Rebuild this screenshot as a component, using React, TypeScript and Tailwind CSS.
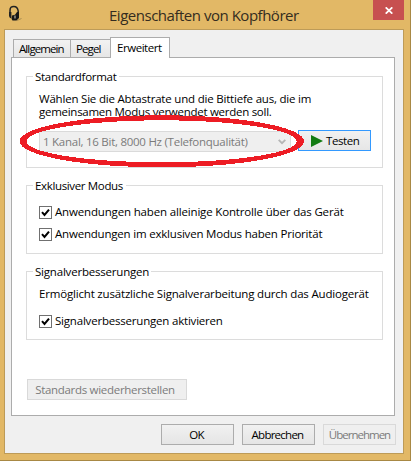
import React from "react";
import { clsx } from "clsx";

const tabs = [
  { name: "Allgemein", className: "w-[58px] pl-[5px] tracking-[-0.9px]" },
  { name: "Pegel", className: "w-[41px] -ml-px pl-[5px] tracking-[-0.9px]" },
];

const Group: React.FC<{ title: string; titleClass: string; className: string; children: React.ReactNode }> = ({
  title,
  titleClass,
  className,
  children,
}) => (
  <section className={clsx("relative w-[357px] border border-[#dcdcdc] pl-3", className)}>
    <h2 className={clsx("absolute left-1.5 -top-2 h-4 bg-white pl-0.5 leading-4", titleClass)}>{title}</h2>
    {children}
  </section>
);

const CheckRow: React.FC<{ label: string; className?: string }> = ({ label, className }) => (
  <div className={clsx("flex h-[22px] items-center gap-[3px]", className)}>
    <span className="flex h-[13px] w-[13px] shrink-0 items-center justify-center border border-[#707070] bg-white">
      <svg width="11" height="11" viewBox="0 0 11 11" fill="none">
        <path d="M2 5.2 4.5 8 9 2.6" stroke="#000" strokeWidth="2" />
      </svg>
    </span>
    <span>{label}</span>
  </div>
);

const HeadphonesIcon = () => (
  <svg width="16" height="17" viewBox="0 0 16 17" fill="none">
    <path d="M3 11V5.5C3 2.5 4.5 1.4 6.8 1.4S10.8 3 11.2 6V11" stroke="#222" strokeWidth="1.5" />
    <path d="M2 7h2.4v6.5L2.8 12.8 2 11Z" fill="#222" />
    <path d="M5 10.5 8 9.8l2-2.8h2v6l-2.5 2.6H5.5L4.6 14Z" fill="#171717" />
    <path d="M7 10.5h2v3H7Z" fill="#77736c" />
    <path d="M10 15.5 14.5 13.5" stroke="#a98c50" />
  </svg>
);

export default function App() {
  return (
    <div className="relative flex h-[461px] w-[411px] flex-col overflow-hidden border-r border-b border-[#a88844] bg-[#e2b866] font-['Open_Sans','Noto_Sans',sans-serif] text-[11.5px] tracking-[-0.2px] text-black">
      {/* Title bar */}
      <header className="flex h-[29px] shrink-0 items-start">
        <div className="ml-[7px] mt-[5px] w-[102px]">
          <HeadphonesIcon />
        </div>
        <h1 className="mt-[3px] w-[264px] whitespace-nowrap text-[15px] leading-6 tracking-[-0.48px] text-[#342c20]">
          Eigenschaften von Kopfhörer
        </h1>
        <button className="flex h-5 w-[31px] items-center justify-center bg-[#c75050]">
          <svg width="8" height="7" viewBox="0 0 8 7">
            <path d="M.7.3 7.3 6.7M7.3.3.7 6.7" stroke="#fff" strokeWidth="1.7" />
          </svg>
        </button>
      </header>

      <main className="ml-1 h-[425px] w-[400px] shrink-0 border border-[#bd9b58] bg-[#f0f0f0] pl-1.5 pt-[7px]">
        {/* Tabs */}
        <nav className="relative z-10 flex h-5 items-end pl-0.5">
          {tabs.map((tab) => (
            <button
              key={tab.name}
              className={clsx(
                "h-[18px] border border-b-0 border-[#acacac] bg-linear-to-b from-[#f2f2f2] to-[#e6e6e6] text-left leading-[18px]",
                tab.className
              )}
            >
              {tab.name}
            </button>
          ))}
          <button className="-mb-px -ml-px h-[21px] w-[60px] border border-b-0 border-[#acacac] bg-white pl-1.5 text-left leading-[18px] tracking-[-0.45px]">
            Erweitert
          </button>
        </nav>

        <div className="h-[359px] w-[384px] border border-[#acacac] bg-white pl-3.5 pt-[18px] whitespace-nowrap">
          <Group title="Standardformat" titleClass="w-[86px] tracking-[-0.3px]" className="h-[92px] pt-[15px]">
            <p className="leading-[13px]">Wählen Sie die Abtastrate und die Bittiefe aus, die im</p>
            <p className="leading-[13px] tracking-[-0.27px]">gemeinsamen Modus verwendet werden soll.</p>
            <div className="mt-3 flex items-start gap-[7px]">
              <div className="mt-px flex h-[21px] w-[252px] items-center justify-between border border-[#dadada] bg-[#efefef] pl-[3px] pr-1 text-[#7b7b7b]">
                <span className="tracking-[-0.26px]">1 Kanal, 16 Bit, 8000 Hz (Telefonqualität)</span>
                <svg width="8" height="6" viewBox="0 0 8 6" fill="none">
                  <path d="M.7.8 4 4.2 7.3.8" stroke="#b5b5b5" strokeWidth="1.8" />
                </svg>
              </div>
              <button className="flex h-[21px] w-[73px] items-center border border-[#3399ff] bg-linear-to-b from-[#f1f1f1] to-[#e6e6e6] pl-3">
                <svg width="12" height="12" viewBox="0 0 12 12">
                  <path d="M0 0 12 6 0 12Z" fill="#137c13" />
                </svg>
                <span className="ml-[3px] tracking-[-0.4px]">Testen</span>
              </button>
            </div>
          </Group>

          <Group title="Exklusiver Modus" titleClass="w-[93px] tracking-[-0.35px]" className="mt-[17px] h-[69px] pt-[15px]">
            <CheckRow label="Anwendungen haben alleinige Kontrolle über das Gerät" className="tracking-[-0.16px]" />
            <CheckRow label="Anwendungen im exklusiven Modus haben Priorität" />
          </Group>

          <Group title="Signalverbesserungen" titleClass="w-[118px]" className="mt-[17px] h-[69px] pt-[14px]">
            <p className="leading-4 tracking-[-0.18px]">Ermöglicht zusätzliche Signalverarbeitung durch das Audiogerät</p>
            <CheckRow label="Signalverbesserungen aktivieren" className="mt-2" />
          </Group>

          <button className="mt-[39px] ml-px block h-[21px] w-[160px] border border-[#d9d9d9] bg-[#efefef] pr-1 leading-[18px] tracking-[-0.3px] text-[#7b7b7b]">
            Standards wiederherstellen
          </button>
        </div>

        {/* Dialog buttons */}
        <footer className="ml-[150px] mt-2 flex gap-2 leading-[18px]">
          <button className="h-[21px] w-[73px] border border-[#acacac] bg-linear-to-b from-[#f1f1f1] to-[#e5e5e5] pt-px pr-0.5 tracking-[-0.7px]">OK</button>
          <button className="h-[21px] w-[73px] border border-[#acacac] bg-linear-to-b from-[#f1f1f1] to-[#e5e5e5] pt-px pr-0.5 tracking-[-0.75px]">Abbrechen</button>
          <button className="h-[21px] w-[73px] border border-[#d9d9d9] bg-[#efefef] pt-px tracking-[-1px] text-[#7b7b7b]">Übernehmen</button>
        </footer>
      </main>

      {/* Marker around the format select */}
      <svg className="pointer-events-none absolute left-0 top-0 z-20" width="411" height="461" viewBox="0 0 411 461">
        <path
          d="M19.5 141.3a142.3 26 0 0 1 284.6 0a142.3 26 0 0 1-284.6 0ZM26.6 141.3a135 21 0 0 0 270 0a135 21 0 0 0-270 0Z"
          fill="#ed1c24"
          fillRule="evenodd"
          shapeRendering="crispEdges"
        />
      </svg>
    </div>
  );
}
